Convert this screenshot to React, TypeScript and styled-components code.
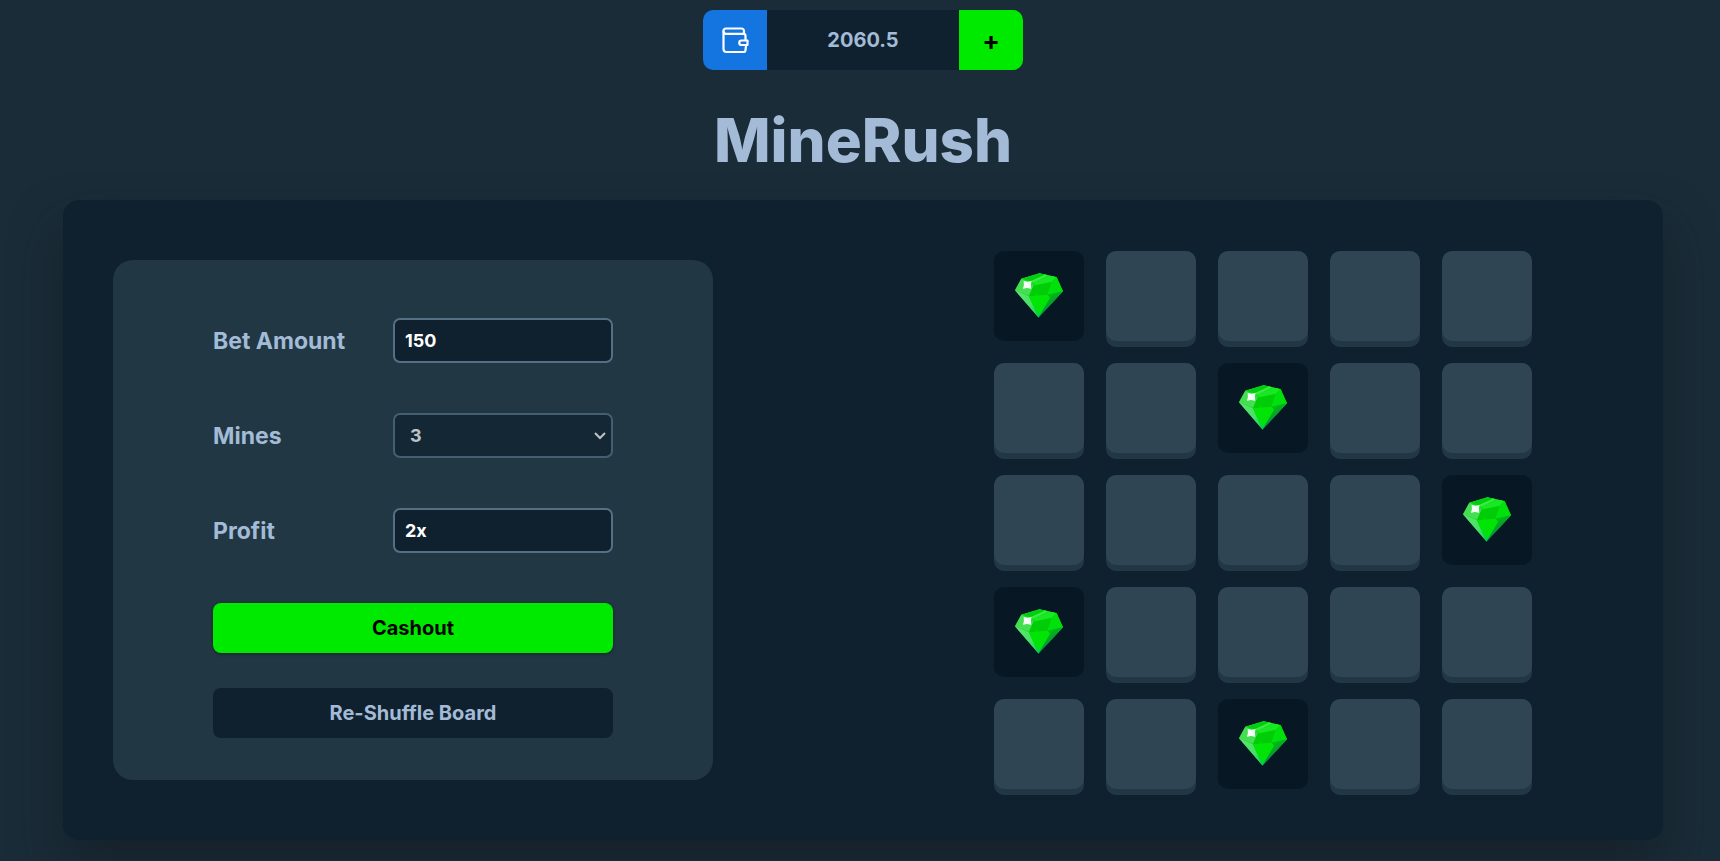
import React, { useState } from "react";
import styled, { createGlobalStyle } from "styled-components";

const colors = {
  page: "#1a2c38",
  card: "#0f212e",
  panel: "#213743",
  tile: "#2f4553",
  open: "#071824",
  text: "#a3bbd6",
  border: "#557086",
  green: "#00ea00",
  blue: "#1475e1",
};

const GlobalStyle = createGlobalStyle`
  *, *::before, *::after { box-sizing: border-box; }
  html { background: ${colors.page}; }
  body { margin: 0; font-family: Inter, "Liberation Sans", sans-serif; color: ${colors.text}; }
  button, input, select { font-family: inherit; margin: 0; }
`;

const Page = styled.div`
  display: flex;
  flex-direction: column;
  align-items: center;
  padding: 10px 57px 20px 63px;
  overflow: hidden;
`;

const WalletBar = styled.header`
  display: flex;
  width: 320px;
  height: 60px;
  border-radius: 10px;
  overflow: hidden;
  background: ${colors.card};
`;

const WalletButton = styled.button<{ $tone: string }>`
  flex: 0 0 64px;
  display: flex;
  align-items: center;
  justify-content: center;
  border: 0;
  padding: 0;
  background: ${(p) => p.$tone};
  color: #000;
  font-size: 26px;
  font-weight: 700;
  cursor: pointer;
`;

const Balance = styled.output`
  flex: 1;
  display: flex;
  align-items: center;
  justify-content: center;
  font-size: 20px;
  font-weight: 700;
`;

const Title = styled.h1`
  margin: 40px 0 30px;
  font-size: 60px;
  line-height: 60px;
  font-weight: 800;
`;

const Card = styled.main`
  display: flex;
  flex-wrap: wrap;
  align-items: center;
  justify-content: space-between;
  width: 100%;
  max-width: 1600px;
  min-height: 640px;
  padding: 50px;
  border-radius: 16px;
  background: ${colors.card};
  box-shadow: 0 30px 50px rgba(20, 28, 36, 0.6);
`;

const Panel = styled.form`
  display: flex;
  flex-direction: column;
  width: 600px;
  max-width: 100%;
  min-height: 520px;
  padding: 58px 100px 42px;
  border-radius: 20px;
  background: ${colors.panel};
`;

const Field = styled.div`
  display: flex;
  align-items: center;
  justify-content: space-between;
  height: 45px;
  margin-bottom: 50px;
`;

const Label = styled.label`
  font-size: 23px;
  font-weight: 700;
`;

const TextBox = styled.input`
  width: 220px;
  height: 45px;
  padding: 0 10px;
  border: 2px solid ${colors.border};
  border-radius: 7px;
  background: ${colors.card};
  color: #fff;
  font-size: 18px;
  font-weight: 700;
`;

const SelectBox = styled.div`
  display: grid;
  align-items: center;
  width: 220px;
  opacity: 0.7;

  > * {
    grid-area: 1 / 1;
  }

  > svg {
    justify-self: end;
    margin-right: 6px;
    pointer-events: none;
  }
`;

const MinesSelect = styled.select`
  appearance: none;
  width: 100%;
  height: 45px;
  padding: 0 0 0 15px;
  border: 2px solid ${colors.border};
  border-radius: 7px;
  background: ${colors.card};
  color: #fff;
  font-size: 18px;
  font-weight: 700;
`;

const ActionButton = styled.button<{ $primary?: boolean }>`
  height: 50px;
  margin-bottom: ${(p) => (p.$primary ? "35px" : "0")};
  border: 0;
  border-radius: 8px;
  background: ${(p) => (p.$primary ? colors.green : colors.card)};
  color: ${(p) => (p.$primary ? "#000" : colors.text)};
  box-shadow: ${(p) => (p.$primary ? "0 1px 3px rgba(15, 25, 35, 0.7)" : "none")};
  font-size: 20px;
  font-weight: 700;
  cursor: pointer;
`;

const BoardArea = styled.section`
  display: flex;
  justify-content: center;
  width: 700px;
  max-width: 100%;
`;

const Board = styled.div`
  display: grid;
  grid-template-columns: repeat(5, 90px);
  grid-auto-rows: 90px;
  gap: 22px;
`;

const Tile = styled.button<{ $open: boolean }>`
  display: flex;
  align-items: center;
  justify-content: center;
  padding: 0;
  border: 0;
  border-radius: 10px;
  background: ${(p) => (p.$open ? colors.open : colors.tile)};
  box-shadow: ${(p) => (p.$open ? "none" : `0 6px 0 ${colors.panel}`)};
  cursor: pointer;
`;

const WalletIcon = () => (
  <svg
    width="28"
    height="28"
    viewBox="0 0 28 28"
    fill="none"
    stroke="#fff"
    strokeWidth="2.2"
    strokeLinejoin="round"
    aria-hidden="true"
  >
    <path d="M23 7.500V5a2.500 2.500 0 0 0-2.500-2.500H4.800A2.300 2.300 0 0 0 2.500 4.800V23a3 3 0 0 0 3 3h17a2 2 0 0 0 2-2l.5-4" />
    <path d="M2.500 5a2.500 2.500 0 0 0 2.500 2.800H22.500a2 2 0 0 1 2 2V14" />
    <path d="M20.500 14.500h6V19h-6a2.200 2.200 0 0 1 0-4.500z" />
  </svg>
);

const Chevron = () => (
  <svg width="14" height="10" viewBox="0 0 14 10" fill="none" stroke="#fff" strokeWidth="2" aria-hidden="true">
    <path d="M2 2 7 7 12 2" />
  </svg>
);

const GemShades = () => (
  <svg width="0" height="0" display="block" aria-hidden="true">
    <defs>
      <linearGradient id="gem-left" x1="0" y1="0" x2="1" y2="1">
        <stop offset="0" stopColor="#5ce670" />
        <stop offset="0.6" stopColor="#48e068" />
        <stop offset="1" stopColor="#18c878" />
      </linearGradient>
      <linearGradient id="gem-right" x1="0.3" y1="0" x2="0.7" y2="0.8">
        <stop offset="0" stopColor="#00c40c" />
        <stop offset="0.5" stopColor="#04a528" />
        <stop offset="1" stopColor="#0a7a50" />
      </linearGradient>
      <linearGradient id="gem-front" x1="0" y1="0" x2="0" y2="1">
        <stop offset="0" stopColor="#00e600" />
        <stop offset="0.7" stopColor="#00e20c" />
        <stop offset="1" stopColor="#12bf70" />
      </linearGradient>
    </defs>
  </svg>
);

const Gem = () => (
  <svg width="48" height="46" viewBox="0 0 145 138" aria-hidden="true">
    <path d="M19 17 74 0 126 12 145 55 71 134 0 52Z" fill="#00dc08" />
    <path d="M19 17 74 0 126 12 110 29 56 38Z" fill="#12e41c" />
    <path d="M24 17 74 1 94 5 45 25Z" fill="#00cc10" />
    <path d="M45 25 91 4 99 6 57 28Z" fill="#3ee84a" />
    <path d="M57 28 108 8 126 12 110 25 64 36Z" fill="#18e822" />
    <path d="M19 17 56 38 42 68 0 52Z" fill="#45de52" />
    <path d="M56 38 110 27 98 65 73 68 42 72Z" fill="#00cc08" />
    <path d="M110 27 126 12 145 55 98 65Z" fill="#00e00a" />
    <path d="M0 52 42 70 71 134Z" fill="url(#gem-left)" />
    <path d="M42 70 98 65 108 72 71 134Z" fill="url(#gem-front)" />
    <path d="M98 65 145 55 71 134 106 74Z" fill="url(#gem-right)" />
    <path d="M26 23 37 26 50 24 48 35 49 47 36 45 24 47 27 36Z" fill="#f2fff2" />
  </svg>
);

const GEMS = new Set([0, 7, 14, 15, 22]);

export default function App() {
  const [bet, setBet] = useState("150");
  const [mines, setMines] = useState("3");

  return (
    <>
      <GlobalStyle />
      <GemShades />
      <Page>
        <WalletBar>
          <WalletButton $tone={colors.blue} aria-label="Wallet">
            <WalletIcon />
          </WalletButton>
          <Balance>2060.5</Balance>
          <WalletButton $tone={colors.green}>+</WalletButton>
        </WalletBar>
        <Title>MineRush</Title>
        <Card>
          <Panel onSubmit={(e) => e.preventDefault()}>
            <Field>
              <Label htmlFor="bet">Bet Amount</Label>
              <TextBox id="bet" value={bet} onChange={(e) => setBet(e.target.value)} />
            </Field>
            <Field>
              <Label htmlFor="mines">Mines</Label>
              <SelectBox>
                <MinesSelect id="mines" value={mines} onChange={(e) => setMines(e.target.value)}>
                  {["1", "2", "3", "4", "5"].map((n) => (
                    <option key={n}>{n}</option>
                  ))}
                </MinesSelect>
                <Chevron />
              </SelectBox>
            </Field>
            <Field>
              <Label htmlFor="profit">Profit</Label>
              <TextBox id="profit" value="2x" readOnly />
            </Field>
            <ActionButton $primary>Cashout</ActionButton>
            <ActionButton type="button">Re-Shuffle Board</ActionButton>
          </Panel>
          <BoardArea>
            <Board>
              {Array.from({ length: 25 }, (_, i) => (
                <Tile key={i} $open={GEMS.has(i)} aria-label={`Tile ${i + 1}`}>
                  {GEMS.has(i) && <Gem />}
                </Tile>
              ))}
            </Board>
          </BoardArea>
        </Card>
      </Page>
    </>
  );
}
